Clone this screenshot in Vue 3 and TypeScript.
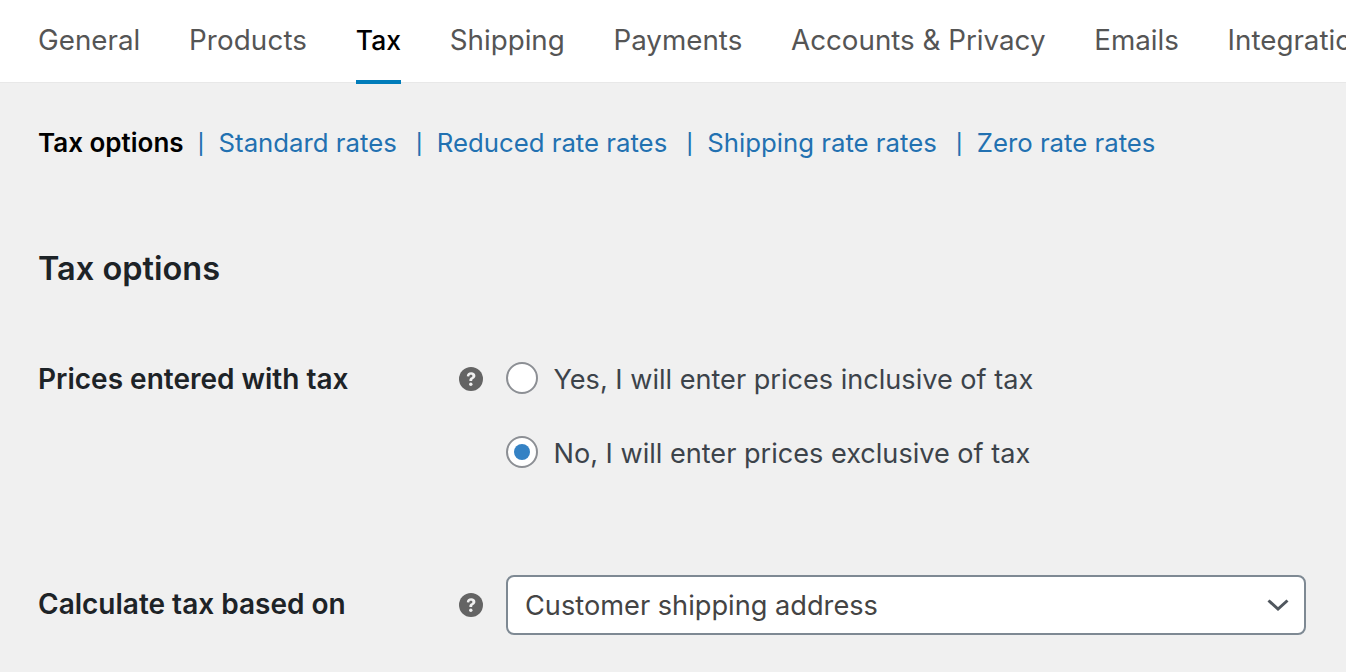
<script setup lang="ts">
const tabs: string[] = ['General', 'Products', 'Tax', 'Shipping', 'Payments', 'Accounts & Privacy', 'Emails', 'Integration']
const links: string[] = ['Standard rates', 'Reduced rate rates', 'Shipping rate rates', 'Zero rate rates']
</script>

<template>
  <div class="page">
    <nav class="tabs">
      <a v-for="t in tabs" :key="t" class="tab" :class="{ active: t === 'Tax' }">{{ t }}</a>
    </nav>
    <main class="content">
      <div class="sub">
        <strong class="cur">Tax options</strong>
        <template v-for="l in links" :key="l">
          <span class="sep">|</span>
          <a class="link">{{ l }}</a>
        </template>
      </div>
      <h2 class="title">Tax options</h2>
      <div class="row first">
        <div class="label">Prices entered with tax</div>
        <svg class="help" viewBox="0 0 24 24" aria-hidden="true">
          <circle cx="12" cy="12" r="12" fill="#646464" />
          <path d="M7.800 9.200c.1-2.500 1.800-4 4.400-4 2.500 0 4.200 1.400 4.200 3.500 0 1.400-.8 2.300-1.900 3-1 .6-1.300 1-1.300 1.800v.5h-2.800v-.7c0-1.400.5-2.100 1.600-2.800 1-.6 1.400-1 1.400-1.600 0-.7-.6-1.200-1.500-1.200-1 0-1.600.6-1.700 1.700z" fill="#f0f0f0" />
          <circle cx="11.800" cy="17.300" r="1.700" fill="#f0f0f0" />
        </svg>
        <div class="radios">
          <label class="radio"><span class="dot"></span>Yes, I will enter prices inclusive of tax</label>
          <label class="radio"><span class="dot on"></span>No, I will enter prices exclusive of tax</label>
        </div>
      </div>
      <div class="row second">
        <div class="label">Calculate tax based on</div>
        <svg class="help" viewBox="0 0 24 24" aria-hidden="true">
          <circle cx="12" cy="12" r="12" fill="#646464" />
          <path d="M7.800 9.200c.1-2.500 1.800-4 4.400-4 2.500 0 4.200 1.400 4.200 3.500 0 1.400-.8 2.300-1.900 3-1 .6-1.300 1-1.300 1.800v.5h-2.800v-.7c0-1.400.5-2.100 1.600-2.800 1-.6 1.400-1 1.400-1.600 0-.7-.6-1.200-1.500-1.200-1 0-1.600.6-1.700 1.700z" fill="#f0f0f0" />
          <circle cx="11.800" cy="17.300" r="1.700" fill="#f0f0f0" />
        </svg>
        <div class="select">
          <span>Customer shipping address</span>
          <svg class="chev" viewBox="0 0 22 14" aria-hidden="true">
            <path d="M1.500 2.500 11 11l9.500-8.500" fill="none" stroke="#50575e" stroke-width="3" />
          </svg>
        </div>
      </div>
    </main>
  </div>
</template>

<style>
html, body { margin: 0; background: #f0f0f0; overflow: hidden; }
</style>

<style scoped>
.page {
  width: 1346px;
  height: 672px;
  overflow: hidden;
  background: #f0f0f0;
  font-family: Inter, "Liberation Sans", sans-serif;
}
.tabs {
  display: flex;
  gap: 48.7px;
  height: 82px;
  padding-left: 38px;
  background: #fff;
  box-shadow: 0 1px 0 #e8e8e8;
  white-space: nowrap;
}
.tab {
  position: relative;
  font-size: 27.75px;
  line-height: 80px;
  color: #555;
  flex: none;
}
.tab:nth-child(2) { letter-spacing: .15px; }
.tab.active { color: #000; font-weight: 500; font-size: 26.5px; }
.tab.active::after {
  content: '';
  position: absolute;
  left: 0;
  right: 0;
  top: 80px;
  height: 4px;
  background: #007cba;
}
.content { padding: 0 40px 0 38px; }
.sub {
  display: flex;
  align-items: center;
  margin-top: 43px;
  height: 34px;
  font-size: 25.75px;
  white-space: nowrap;
}
.cur { color: #000; font-weight: 600; font-size: 26px; }
.sep {
  width: 4px;
  margin: 3px 17px 0 19px;
  text-align: center;
  font-size: 20px;
  font-weight: 500;
  color: #2271b1;
}
.cur + .sep { margin-left: 14px; }
.link { color: #2271b1; }
.title {
  margin: 90px 0 0;
  font-size: 32.5px;
  line-height: 40px;
  font-weight: 600;
  color: #1d2327;
}
.row { display: flex; align-items: flex-start; }
.first { margin-top: 73px; }
.second { margin-top: 105px; align-items: center; }
.label {
  width: 421px;
  flex: none;
  font-size: 28px;
  font-weight: 600;
  color: #1d2327;
  line-height: 34px;
}
.help {
  flex: none;
  width: 24px;
  height: 24px;
  margin-top: 5px;
  margin-right: 23px;
}
.second .label { margin-bottom: 2px; }
.second .help { margin-top: 0; }
.radios { display: flex; flex-direction: column; gap: 40px; }
.radio {
  display: flex;
  align-items: center;
  gap: 15.5px;
  height: 34px;
  font-size: 27.1px;
  color: #3c434a;
  white-space: nowrap;
}
.dot {
  box-sizing: border-box;
  width: 32px;
  height: 32px;
  margin-bottom: 2px;
  border-radius: 50%;
  border: 2px solid #8c8f94;
  background: #fff;
  display: flex;
  align-items: center;
  justify-content: center;
}
.dot.on::before {
  content: '';
  width: 16px;
  height: 16px;
  border-radius: 50%;
  background: #3582c4;
}
.select {
  box-sizing: border-box;
  width: 800px;
  height: 60px;
  display: flex;
  align-items: center;
  justify-content: space-between;
  padding: 0 15px 0 17px;
  background: #fff;
  border: 2px solid #7e8993;
  border-radius: 8px;
  font-size: 27.2px;
  color: #444;
}
.chev { width: 22px; height: 14px; }
</style>
